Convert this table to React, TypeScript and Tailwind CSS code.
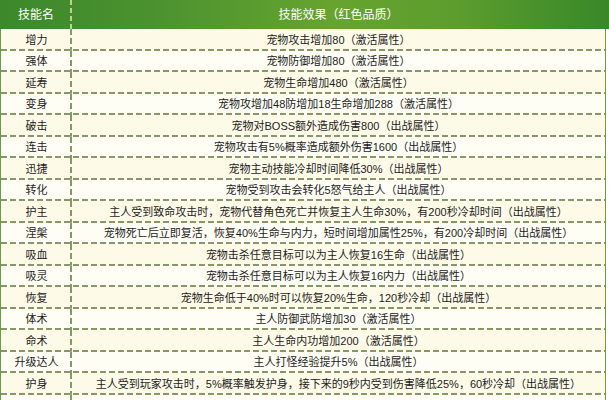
import React from 'react';

const skills: [string, string][] = [
  ['增力', '宠物攻击增加80（激活属性）'],
  ['强体', '宠物防御增加80（激活属性）'],
  ['延寿', '宠物生命增加480（激活属性）'],
  ['变身', '宠物攻增加48防增加18生命增加288（激活属性）'],
  ['破击', '宠物对BOSS额外造成伤害800（出战属性）'],
  ['连击', '宠物攻击有5%概率造成额外伤害1600（出战属性）'],
  ['迅捷', '宠物主动技能冷却时间降低30%（出战属性）'],
  ['转化', '宠物受到攻击会转化5怒气给主人（出战属性）'],
  ['护主', '主人受到致命攻击时，宠物代替角色死亡并恢复主人生命30%，有200秒冷却时间（出战属性）'],
  ['涅槃', '宠物死亡后立即复活，恢复40%生命与内力，短时间增加属性25%，有200冷却时间（出战属性）'],
  ['吸血', '宠物击杀任意目标可以为主人恢复16生命（出战属性）'],
  ['吸灵', '宠物击杀任意目标可以为主人恢复16内力（出战属性）'],
  ['恢复', '宠物生命低于40%时可以恢复20%生命，120秒冷却（出战属性）'],
  ['体术', '主人防御武防增加30（激活属性）'],
  ['命术', '主人生命内功增加200（激活属性）'],
  ['升级达人', '主人打怪经验提升5%（出战属性）'],
  ['护身', '主人受到玩家攻击时，5%概率触发护身，接下来的9秒内受到伤害降低25%，60秒冷却（出战属性）'],
  ['', ''],
];

const App: React.FC = () => {
  return (
    <div className="w-[609px] h-[400px] overflow-hidden bg-white font-['Liberation_Sans','Noto_Sans_CJK_SC',sans-serif] text-[11px] text-[#1c1c1c]">
      {/* header */}
      <div className="flex h-[29px] bg-[linear-gradient(90deg,#3c882b_0%,#4b922f_25%,#67a42f_55%,#5c9d2e_75%,#388828_100%)] text-white text-[12px]">
        <div className="w-[72px] flex items-center justify-center bg-[repeating-linear-gradient(180deg,#b4d890_0_5px,transparent_5px_8px)] bg-no-repeat bg-right bg-[length:2px_100%]">
          技能名
        </div>
        <div className="w-[533px] flex items-center justify-center">技能效果（红色品质）</div>
      </div>

      {/* rows */}
      <div className="w-[606px] border-l-[1.5px] border-r-[1.5px] border-[#6c9a4c]">
        {skills.map(([name, effect], i) => (
          <div
            key={i}
            className={`flex h-[21.5px] bg-no-repeat bg-bottom bg-[length:100%_2px] bg-[repeating-linear-gradient(90deg,#86976a_0_6px,transparent_6px_9px)] ${
              i % 2 === 0 ? 'bg-[#fdfbe8]' : 'bg-[#fefef5]'
            }`}
          >
            <div className="w-[71px] flex items-center justify-center bg-[repeating-linear-gradient(180deg,#86976a_0_6px,transparent_6px_9px)] bg-no-repeat bg-right bg-[length:2px_100%]">
              {name}
            </div>
            <div className="flex-1 flex items-center justify-center whitespace-nowrap">{effect}</div>
          </div>
        ))}
      </div>
    </div>
  );
};

export default App;
